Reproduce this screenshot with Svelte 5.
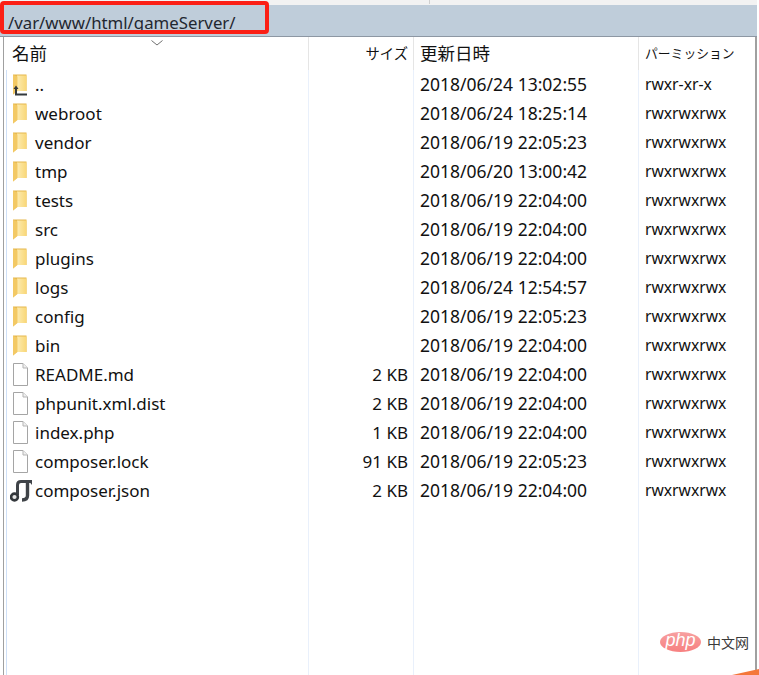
<script lang="ts">
  const folder = "2018/06/19 22:04:00";
  const rows = [
    { name: "..", kind: "up", size: "", date: "2018/06/24 13:02:55", perm: "rwxr-xr-x" },
    { name: "webroot", kind: "folder", size: "", date: "2018/06/24 18:25:14", perm: "rwxrwxrwx" },
    { name: "vendor", kind: "folder", size: "", date: "2018/06/19 22:05:23", perm: "rwxrwxrwx" },
    { name: "tmp", kind: "folder", size: "", date: "2018/06/20 13:00:42", perm: "rwxrwxrwx" },
    { name: "tests", kind: "folder", size: "", date: folder, perm: "rwxrwxrwx" },
    { name: "src", kind: "folder", size: "", date: folder, perm: "rwxrwxrwx" },
    { name: "plugins", kind: "folder", size: "", date: folder, perm: "rwxrwxrwx" },
    { name: "logs", kind: "folder", size: "", date: "2018/06/24 12:54:57", perm: "rwxrwxrwx" },
    { name: "config", kind: "folder", size: "", date: "2018/06/19 22:05:23", perm: "rwxrwxrwx" },
    { name: "bin", kind: "folder", size: "", date: folder, perm: "rwxrwxrwx" },
    { name: "README.md", kind: "file", size: "2 KB", date: folder, perm: "rwxrwxrwx" },
    { name: "phpunit.xml.dist", kind: "file", size: "2 KB", date: folder, perm: "rwxrwxrwx" },
    { name: "index.php", kind: "file", size: "1 KB", date: folder, perm: "rwxrwxrwx" },
    { name: "composer.lock", kind: "file", size: "91 KB", date: "2018/06/19 22:05:23", perm: "rwxrwxrwx" },
    { name: "composer.json", kind: "script", size: "2 KB", date: folder, perm: "rwxrwxrwx" },
  ];
</script>

<div class="page">
  <div class="strip"><span class="strip-tick"></span></div>
  <div class="pathbar"><span class="path">/var/www/html/gameServer/</span></div>
  <div class="redbox"></div>

  <div class="panel">
    <div class="row head">
      <div class="cell name-head">名前</div>
      <div class="cell size">サイズ</div>
      <div class="cell date">更新日時</div>
      <div class="cell perm">パーミッション</div>
      <svg class="sort" width="12" height="6" viewBox="0 0 12 6"><path d="M0.5 0.5L6 5L11.5 0.5" fill="none" stroke="#6f6f6f" /></svg>
    </div>
    <div class="list">
      {#each rows as r}
        <div class="row item">
          <div class="cell name">
            <span class="ico">
              {#if r.kind === "folder" || r.kind === "up"}
                <svg width="14" height="21" viewBox="0 0 14 21">
                  <defs>
                    <linearGradient id="fold" x1="0" y1="0" x2="1" y2="0">
                      <stop offset="0" stop-color="#fcebb0" />
                      <stop offset="1" stop-color="#f9d777" />
                    </linearGradient>
                  </defs>
                  <path d="M0 0.5H13.5V17H4L0 20.5Z" fill="#e6b84e" />
                  <path d="M4 1.5H13.5V17H4Z" fill="url(#fold)" />
                  <path d="M0 1V20.5L4.5 17V2.5Z" fill="#f3c964" />
                </svg>
                {#if r.kind === "up"}
                  <svg class="uparrow" width="14" height="11" viewBox="0 0 14 11">
                    <path d="M3 3V9.5H14" fill="none" stroke="#33383d" stroke-width="2" />
                    <path d="M0.5 4L3 0.5L5.5 4Z" fill="#33383d" />
                  </svg>
                {/if}
              {:else if r.kind === "file"}
                <svg width="15" height="23" viewBox="0 0 15 23">
                  <path d="M0.5 0.5H10L14.5 5V22.5H0.5Z" fill="#fff" stroke="#a5a5a5" />
                  <path d="M10 0.5V5H14.5" fill="#f0f0f0" stroke="#b5b5b5" />
                </svg>
              {:else}
                <svg class="scripticon" width="22" height="22" viewBox="0 0 22 22">
                  <path d="M7.5 15V5C7.5 2.5 9 1.5 11 1.5H21" fill="none" stroke="#3f4348" stroke-width="3" />
                  <path d="M17.5 2V15.5C17.5 19 15.5 20 12 20" fill="none" stroke="#3f4348" stroke-width="3.4" />
                  <path d="M18 0H22V5Z" fill="#3f4348" />
                  <circle cx="4.5" cy="17" r="3.4" fill="#e6e6e6" stroke="#33373b" stroke-width="2.6" />
                </svg>
              {/if}
            </span>
            <span>{r.name}</span>
          </div>
          <div class="cell size">{r.size}</div>
          <div class="cell date">{r.date}</div>
          <div class="cell perm">{r.perm}</div>
        </div>
      {/each}
    </div>
    <div class="filler">
      <span></span><span></span><span></span><span></span>
    </div>
  </div>

  <div class="logo">
    <span class="pill">php</span>
    <span class="cn">中文网</span>
  </div>
  <div class="corner"></div>
</div>

<style>
  :global(body) {
    margin: 0;
    background: #fff;
  }
  .page {
    position: relative;
    width: 759px;
    height: 675px;
    overflow: hidden;
    display: flex;
    flex-direction: column;
    font-family: "Noto Sans", "Noto Sans CJK JP", sans-serif;
    font-size: 17px;
    color: #111;
  }
  .strip {
    height: 5px;
    background: #f2f2f2;
    flex: none;
    position: relative;
    margin-right: 2px;
  }
  .strip-tick {
    position: absolute;
    left: 429px;
    top: 0;
    width: 1px;
    height: 4px;
    background: #cfcfcf;
  }
  .pathbar {
    flex: none;
    background: #bfcdda;
    border-bottom: 1px solid #8d97a3;
    display: flex;
    align-items: center;
    padding-left: 8px;
    padding-top: 3px;
    height: 28px;
    margin-right: 2px;
  }
  .path {
    font-size: 16.8px;
    color: #1f2730;
  }
  .redbox {
    position: absolute;
    left: 0;
    top: 1px;
    width: 269px;
    height: 33px;
    box-sizing: border-box;
    border: 4px solid #fb1f15;
    border-radius: 4px;
  }
  .panel {
    flex: 1;
    display: flex;
    flex-direction: column;
    margin-left: 3px;
    margin-right: 2px;
    border-left: 1px solid #a0a0a0;
    border-right: 2px solid #a0a0a0;
    min-height: 0;
  }
  .row {
    display: grid;
    grid-template-columns: 305px 105px 225px 1fr;
  }
  .head {
    height: 33px;
    position: relative;
    flex: none;
  }
  .sort {
    position: absolute;
    left: 147px;
    top: 3px;
  }
  .head .cell {
    border-right: 1px solid #e5e5e5;
    line-height: 33px;
    font-size: 17.5px;
  }
  .head .cell:nth-child(4) {
    border-right: 0;
  }
  .cell {
    white-space: nowrap;
    line-height: 29px;
    box-sizing: border-box;
  }
  .item .cell {
    border-right: 1px solid #e9f0fb;
  }
  .item .cell:nth-child(4) {
    border-right: 0;
  }
  .list {
    flex: none;
    margin-left: 2px;
    border-left: 1px solid #cfe0f7;
  }
  .item {
    height: 29px;
    grid-template-columns: 302px 105px 225px 1fr;
  }
  .name {
    display: flex;
    align-items: center;
    padding-left: 3px;
  }
  .ico {
    position: relative;
    width: 25px;
    height: 23px;
    flex: none;
    display: flex;
    align-items: center;
    padding-left: 3px;
    box-sizing: border-box;
  }
  .scripticon {
    margin-left: -3px;
    flex: none;
  }
  .uparrow {
    position: absolute;
    left: 3px;
    top: 12px;
  }
  .name-head {
    padding-left: 8px;
  }
  .size {
    text-align: right;
    padding-right: 5px;
  }
  .head .size {
    font-size: 14.3px;
  }
  .date {
    padding-left: 6px;
    font-size: 17.5px;
  }
  .perm {
    padding-left: 6px;
    font-size: 15.7px;
  }
  .head .perm {
    font-size: 12.8px;
  }
  .filler {
    flex: 1;
    display: grid;
    grid-template-columns: 302px 105px 225px 1fr;
    margin-left: 2px;
    border-left: 1px solid #cfe0f7;
  }
  .filler span {
    border-right: 1px solid #e9f0fb;
  }
  .filler span:last-child {
    border-right: 0;
  }
  .logo {
    position: absolute;
    left: 660px;
    top: 632px;
    display: flex;
    align-items: center;
    gap: 6px;
  }
  .pill {
    width: 41px;
    height: 20px;
    border-radius: 50%;
    background: linear-gradient(#f7a0a0, #f78080);
    color: #fff;
    font-style: italic;
    font-size: 18px;
    line-height: 17px;
    text-align: center;
    font-family: "Liberation Sans", sans-serif;
  }
  .cn {
    font-size: 14px;
    color: #3a3a3a;
    font-family: "Noto Sans CJK SC", sans-serif;
  }
  .corner {
    position: absolute;
    right: 0;
    bottom: 0;
    width: 27px;
    height: 6px;
    background: #f4773a;
    clip-path: polygon(100% 0, 100% 100%, 0 100%);
  }
</style>
